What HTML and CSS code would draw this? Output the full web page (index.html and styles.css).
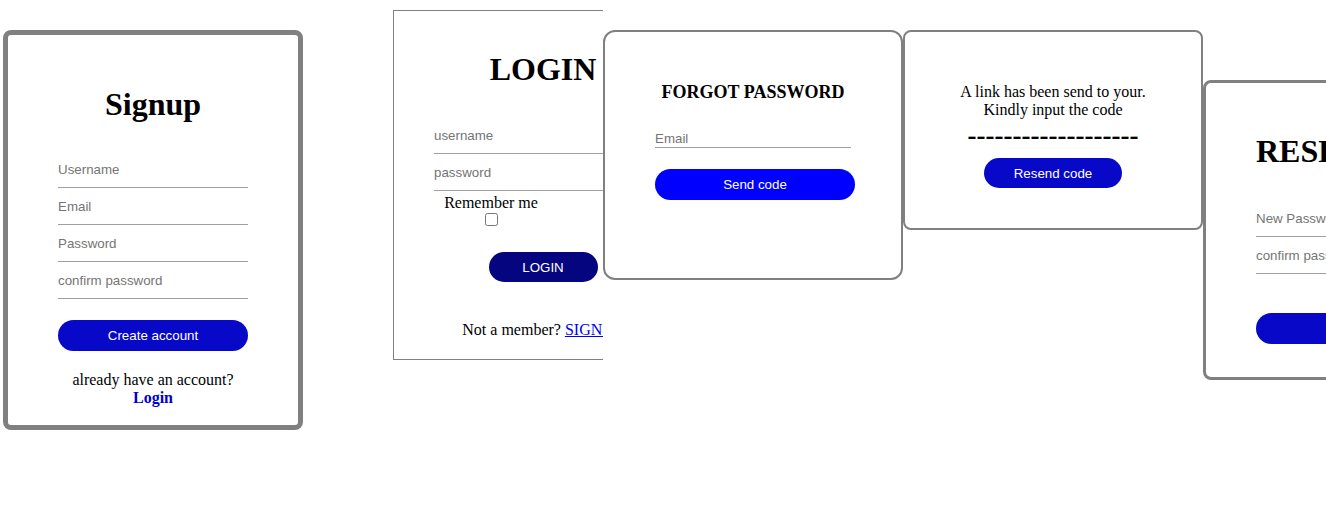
FILE: index.html
```html
<!DOCTYPE html>
<html lang="en">
<head>
<meta charset="utf-8">
<title>Auth screens</title>
<link rel="stylesheet" href="styles.css">
</head>
<body>
<div class="row">
  <div class="card signup">
    <h1 class="title">Signup</h1>
    <form class="stack">
      <input class="field" type="text" placeholder="Username">
      <input class="field" type="email" placeholder="Email">
      <input class="field" type="password" placeholder="Password">
      <input class="field" type="password" placeholder="confirm password">
      <button class="btn btn-create" type="button">Create account</button>
    </form>
    <p class="note">already have an account?<br><a class="bold-link" href="#">Login</a></p>
  </div>

  <div class="login-clip">
    <div class="card login">
      <h1 class="title">LOGIN</h1>
      <form class="login-form">
        <input class="field login-field" type="text" placeholder="username">
        <input class="field login-field" type="password" placeholder="password">
        <div class="remember">
          <label>Remember me</label>
          <input class="check" type="checkbox">
        </div>
        <button class="btn btn-login" type="button">LOGIN</button>
      </form>
      <p class="member">Not a member? <a href="#">SIGN UP</a></p>
    </div>
  </div>

  <div class="card forgot">
    <h3 class="subtitle">FORGOT PASSWORD</h3>
    <form class="inset">
      <input class="email-field" type="email" placeholder="Email">
      <button class="btn btn-send" type="button">Send code</button>
    </form>
  </div>

  <div class="card code">
    <p class="code-text">A link has been send to your.<br>Kindly input the code</p>
    <div class="dashes">-------------------</div>
    <button class="btn btn-resend" type="button">Resend code</button>
  </div>

  <div class="card reset">
    <h1 class="title reset-title">RESET PASSWORD</h1>
    <form>
      <input class="field reset-field" type="password" placeholder="New Password">
      <input class="field reset-field" type="password" placeholder="confirm password">
      <button class="btn btn-reset" type="button">Reset</button>
    </form>
  </div>
</div>
</body>
</html>
```

FILE: styles.css
```css
* {
  box-sizing: border-box;
}

html, body {
  margin: 0;
  padding: 0;
  background: #ffffff;
}

body {
  font-family: "Liberation Serif", "Times New Roman", serif;
  font-size: 16px;
  color: #000;
}

.row {
  display: flex;
  align-items: flex-start;
  width: 1326px;
  height: 505px;
  padding-left: 3px;
  overflow: hidden;
}

.card {
  flex-shrink: 0;
  background: #fff;
  border: 2px solid #808080;
}

.title {
  margin: 0;
  font-size: 32px;
  font-weight: bold;
  line-height: normal;
  text-align: center;
}

.field {
  display: block;
  height: 37px;
  padding: 0;
  border: none;
  border-bottom: 1px solid #a0a0a0;
  outline: none;
  background: transparent;
  font-family: "Liberation Sans", Arial, sans-serif;
  font-size: 13.333px;
  color: #000;
}

.field::placeholder,
.email-field::placeholder {
  color: #757575;
}

.btn {
  display: block;
  border: none;
  color: #fff;
  font-family: "Liberation Sans", Arial, sans-serif;
  font-size: 13.333px;
  padding: 0;
  cursor: pointer;
}

/* Signup */
.signup {
  width: 300px;
  height: 400px;
  margin-top: 30px;
  border-width: 5px;
  border-radius: 8px;
  padding-top: 51px;
}

.stack {
  width: 190px;
  margin: 28px auto 0;
}

.stack .field {
  width: 190px;
}

.btn-create {
  width: 190px;
  height: 31px;
  margin-top: 21px;
  border-radius: 16px;
  background: #0808c9;
}

.note {
  margin: 20px 0 0;
  text-align: center;
  line-height: normal;
}

.bold-link {
  color: #0000cc;
  font-weight: bold;
  text-decoration: none;
}

/* Login */
.login-clip {
  flex-shrink: 0;
  width: 210px;
  height: 350px;
  margin-top: 10px;
  margin-left: 90px;
  overflow: hidden;
}

.login {
  width: 300px;
  height: 350px;
  border-width: 1px;
  padding-top: 40px;
}

.login-form {
  margin-top: 29px;
}

.login-field {
  width: 220px;
  margin-left: 40px;
}

.remember {
  width: 116px;
  margin-left: 39px;
  padding-top: 3px;
  text-align: center;
  line-height: normal;
}

.check {
  display: block;
  width: 13px;
  height: 13px;
  margin: 1px auto 0;
}

.btn-login {
  width: 109px;
  height: 30px;
  margin: 26px auto 0;
  border-radius: 15px;
  background: #050580;
}

.member {
  margin: 39px 0 0;
  padding-left: 3px;
  text-align: center;
  white-space: nowrap;
}

.member a {
  color: #0000ee;
}

/* Forgot */
.forgot {
  width: 300px;
  height: 250px;
  margin-top: 30px;
  border-radius: 12px;
  padding-top: 50px;
}

.subtitle {
  margin: 0;
  font-size: 18px;
  font-weight: bold;
  line-height: normal;
  text-align: center;
}

.inset {
  padding-left: 50px;
  margin-top: 28px;
}

.email-field {
  display: block;
  width: 196px;
  height: 17px;
  padding: 0 0 2px;
  border: none;
  border-bottom: 1px solid #a0a0a0;
  outline: none;
  font-family: "Liberation Sans", Arial, sans-serif;
  font-size: 13.333px;
}

.btn-send {
  width: 200px;
  height: 31px;
  margin-top: 21px;
  border-radius: 16px;
  background: #0000ff;
}

/* Code */
.code {
  width: 300px;
  height: 200px;
  margin-top: 30px;
  border-radius: 8px;
  padding-top: 51px;
  text-align: center;
}

.code-text {
  margin: 0;
  line-height: 18px;
}

.dashes {
  font-size: 27px;
  font-weight: bold;
  line-height: normal;
  margin-top: 1px;
}

.btn-resend {
  width: 138px;
  height: 30px;
  margin: 7px auto 0;
  border-radius: 15px;
  background: #0808c9;
}

/* Reset */
.reset {
  width: 300px;
  height: 300px;
  margin-top: 80px;
  border-width: 3px;
  border-radius: 8px;
  padding: 50px 0 0 50px;
}

.reset-title {
  text-align: left;
  white-space: nowrap;
}

.reset form {
  margin-top: 30px;
}

.reset-field {
  width: 196px;
}

.btn-reset {
  width: 190px;
  height: 31px;
  margin-top: 39px;
  border-radius: 16px;
  background: #0808c9;
}
```
